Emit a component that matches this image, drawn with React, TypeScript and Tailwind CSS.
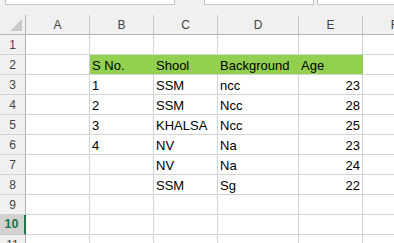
import React from "react";

const widths = [64, 64, 64, 81, 64, 64];
const letters = ["A", "B", "C", "D", "E", "F"];

type Cell = { t: string; right?: boolean };

const rows: (Cell | null)[][] = [
  [null, null, null, null, null, null],
  [null, { t: "S No." }, { t: "Shool" }, { t: "Background" }, { t: "Age" }, null],
  [null, { t: "1" }, { t: "SSM" }, { t: "ncc" }, { t: "23", right: true }, null],
  [null, { t: "2" }, { t: "SSM" }, { t: "Ncc" }, { t: "28", right: true }, null],
  [null, { t: "3" }, { t: "KHALSA" }, { t: "Ncc" }, { t: "25", right: true }, null],
  [null, { t: "4" }, { t: "NV" }, { t: "Na" }, { t: "23", right: true }, null],
  [null, null, { t: "NV" }, { t: "Na" }, { t: "24", right: true }, null],
  [null, null, { t: "SSM" }, { t: "Sg" }, { t: "22", right: true }, null],
  [null, null, null, null, null, null],
  [null, null, null, null, null, null],
  [null, null, null, null, null, null],
];

export default function App() {
  return (
    <div
      className="w-[394px] h-[243px] overflow-hidden bg-white relative"
      style={{ fontFamily: '"Liberation Sans", Arial, sans-serif' }}
    >
      {/* top bar */}
      <div className="h-[15px] bg-[#f0f0f0] flex items-start pl-[5px]">
        <div className="w-[170px] h-[5px] bg-white border-x border-b border-[#c3c3c3] shrink-0" />
        <div className="w-[110px] h-[5px] bg-white border-x border-b border-[#c3c3c3] shrink-0 ml-[29px]" />
        <div className="w-[90px] h-[5px] bg-white border-l border-b border-[#c3c3c3] shrink-0 ml-[3px]" />
      </div>
      {/* column header row */}
      <div className="flex h-[20px] bg-[#f0f0f0] border-b border-[#b4b4b4]">
        <div className="w-[26px] shrink-0 border-r border-[#b4b4b4] relative">
          <svg width="26" height="19" className="absolute left-0 top-0">
            <polygon points="10,16 22,4 22,16" fill="#c9c9c9" />
          </svg>
        </div>
        {letters.map((l, i) => (
          <div
            key={l}
            className="shrink-0 border-r border-[#c8c8c8] flex items-center justify-center text-[12px] text-[#444444] leading-none pt-[1px]"
            style={{ width: widths[i] }}
          >
            {l}
          </div>
        ))}
      </div>
      {/* rows */}
      {rows.map((r, ri) => {
        const num = ri + 1;
        const selected = num === 10;
        return (
          <div key={ri} className="flex h-[20px]">
            <div
              className={
                selected
                  ? "w-[26px] shrink-0 bg-[#d2d2d2] border-b border-[#c8c8c8] border-r-2 border-r-[#217346] flex items-center justify-center text-[12.5px] font-bold text-[#217346] leading-none pr-[1px]"
                  : "w-[26px] shrink-0 bg-[#f0f0f0] border-b border-[#d4d4d4] border-r border-r-[#b4b4b4] flex items-center justify-center text-[12px] text-[#444444] leading-none"
              }
            >
              {num}
            </div>
            {r.map((c, ci) => {
              const green = num === 2 && ci >= 1 && ci <= 4;
              return (
                <div
                  key={ci}
                  className={
                    (green
                      ? "bg-[#92d050] border-r border-r-[#92d050] "
                      : "border-r border-r-[#d4d4d4] ") +
                    "shrink-0 border-b border-b-[#d4d4d4] flex items-end pb-[1px] px-[2px] text-[13px] leading-[15px] text-black whitespace-nowrap overflow-visible " +
                    (c?.right ? "justify-end" : "justify-start")
                  }
                  style={{ width: widths[ci] }}
                >
                  {c ? c.t : ""}
                </div>
              );
            })}
          </div>
        );
      })}
    </div>
  );
}
